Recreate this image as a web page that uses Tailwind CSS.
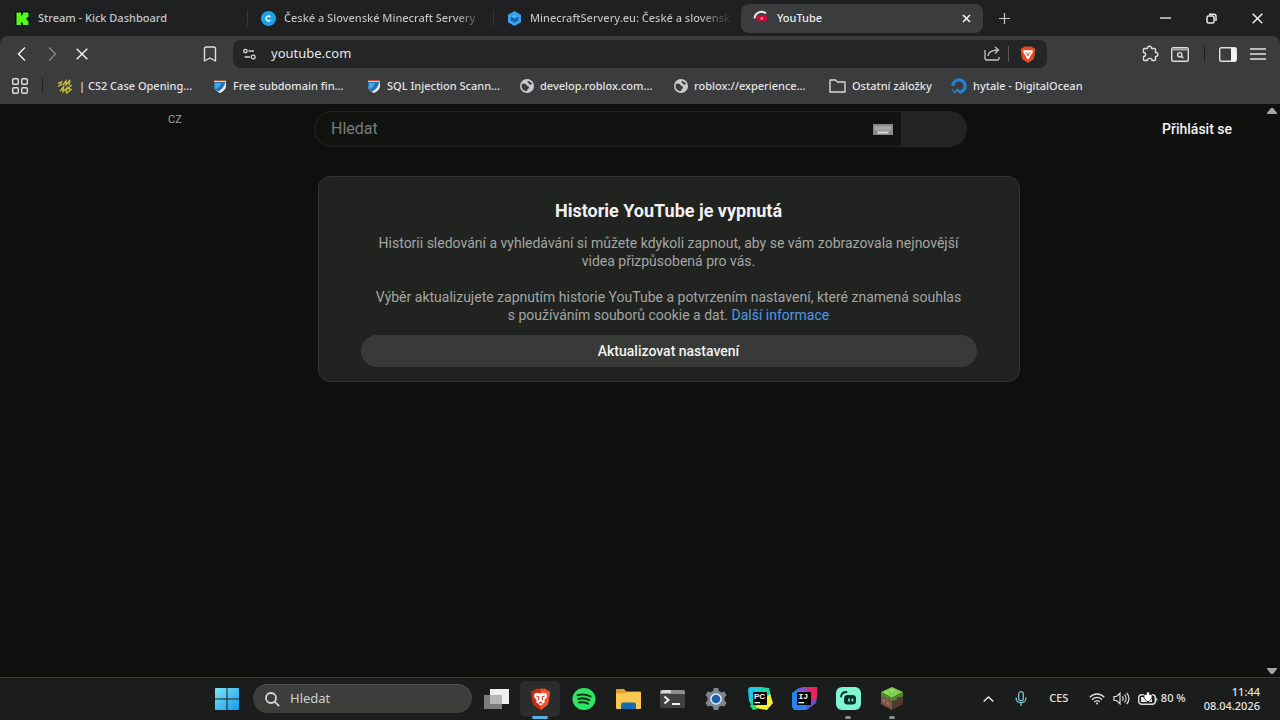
<!DOCTYPE html>
<html lang="cs">
<head>
    <meta charset="UTF-8">
    <meta name="viewport" content="width=device-width, initial-scale=1.0">
    <title>YouTube</title>
    <script src="https://cdn.jsdelivr.net/npm/@tailwindcss/browser@4"></script>
</head>
<body class="flex min-h-screen flex-col overflow-x-hidden bg-[#0e100e] font-['Noto_Sans','Open_Sans',sans-serif] text-[#e3e3e3]">

    <!-- Tab strip -->
    <nav class="flex h-9 items-center bg-[#1f2022] text-[11px] font-medium text-[#c4c5c6]" aria-label="Karty">
        <a href="#" class="flex h-7 w-[247px] items-center gap-2 pl-[15px]">
            <svg class="size-[15px] shrink-0" viewBox="0 0 15 15"><rect width="15" height="15" rx="2" fill="#081005"/><path fill="#53fc18" d="M1.500 1.500h4.500v3h1v-1h1v-2h5.500v4.500h-1.500v1.500h-1v1h1v1h1.500v4.500H8v-2H7v-1H6v3H1.500z"/></svg>
            <span>Stream - Kick Dashboard</span>
        </a>
        <span class="h-4 w-px bg-[#36373a]"></span>
        <a href="#" class="flex h-7 w-[245px] items-center gap-2 pl-[13px]">
            <svg class="size-[15px] shrink-0" viewBox="0 0 15 15"><circle cx="7.5" cy="7.5" r="7.5" fill="#1ba5f0"/><path fill="none" stroke="#e9f7ff" stroke-width="1.5" d="M9.400 6A2.400 2.400 0 1 0 9.400 9"/></svg>
            <span class="bg-linear-to-r from-[#c4c5c6] from-90% to-[#5a5b5d] bg-clip-text whitespace-nowrap text-transparent">České a Slovenské Minecraft Servery</span>
        </a>
        <span class="h-4 w-px bg-[#36373a]"></span>
        <a href="#" class="flex h-7 w-[247px] items-center gap-2 pl-[13px]">
            <svg class="size-[15px] shrink-0" viewBox="0 0 15 15"><path fill="#3aa2ee" d="M7.5 0 14 3.7v7.6L7.5 15 1 11.300V3.700z"/><path fill="#1763ae" d="m7.500 3.500 3.700 2.100v3.900l-3.700 2.100-3.700-2.100V5.600z"/><path fill="#4db3f7" d="m7.500 3.500 3.700 2.100-3.700 2-3.700-2z"/></svg>
            <span class="bg-linear-to-r from-[#c4c5c6] from-85% to-[#2b2c2e] bg-clip-text whitespace-nowrap text-transparent">MinecraftServery.eu: České a slovensk</span>
        </a>
        <a href="#" class="flex h-[29px] w-[242px] items-center gap-2 rounded-lg bg-[#3b3c3e] pr-3 pl-3 text-[#ececec]" aria-current="page">
            <svg class="size-4 shrink-0" viewBox="0 0 16 16"><rect x="3.500" y="5" width="10.500" height="6.500" rx="3" fill="#d6093f"/><path fill="none" stroke="#f5e9ec" stroke-width="2" d="M1.500 8.500a7 7 0 0 1 11.500-5"/><path fill="#ffd5df" d="m7.800 7 2.600 1.400-2.600 1.400z"/></svg>
            <span class="grow">YouTube</span>
            <svg class="size-[9px]" viewBox="0 0 9 9" stroke="#eee" stroke-width="1.700"><path d="m1 1 7 7M8 1 1 8"/></svg>
        </a>
        <button class="flex h-9 w-[42px] items-center justify-center" aria-label="Nová karta">
            <svg class="size-[11px]" viewBox="0 0 11 11" stroke="#c8c8c8" stroke-width="1.200"><path d="M5.500 0v11M0 5.500h11"/></svg>
        </button>
        <div class="ml-auto flex">
            <button class="flex h-9 w-[46px] items-center justify-center" aria-label="Minimalizovat">
                <svg class="size-[11px]" viewBox="0 0 11 11" stroke="#e8e8e8" stroke-width="1.400"><path d="M0 5h11"/></svg>
            </button>
            <button class="flex h-9 w-[46px] items-center justify-center" aria-label="Obnovit">
                <svg class="size-[11px]" viewBox="0 0 11 11" fill="none" stroke="#e8e8e8" stroke-width="1.500"><rect x="1" y="3" width="7" height="7" rx="1.500"/><path d="M3 1.200h5a2 2 0 0 1 2 2V8"/></svg>
            </button>
            <button class="flex h-9 w-[46px] items-center justify-center" aria-label="Zavřít">
                <svg class="size-[11px]" viewBox="0 0 11 11" stroke="#eee" stroke-width="1.500"><path d="m.7.700 9.600 9.600M10.300.700.700 10.300"/></svg>
            </button>
        </div>
    </nav>

    <!-- Toolbar -->
    <div class="bg-[#1f2022]">
    <div class="rounded-t-lg bg-[#3b3c3e]">
        <div class="flex h-9 items-center px-[7px]">
            <button class="flex h-7 w-[30px] items-center justify-center" aria-label="Zpět">
                <svg class="size-4" viewBox="0 0 16 16" fill="none" stroke="#eee" stroke-width="1.500"><path d="M11 1.500 4.500 8l6.500 6.500"/></svg>
            </button>
            <button class="flex h-7 w-[30px] items-center justify-center" aria-label="Vpřed">
                <svg class="size-4" viewBox="0 0 16 16" fill="none" stroke="#87888a" stroke-width="1.400"><path d="M5 1.500 11.500 8 5 14.500"/></svg>
            </button>
            <button class="flex h-7 w-[30px] items-center justify-center" aria-label="Zastavit">
                <svg class="size-3" viewBox="0 0 12 12" stroke="#eee" stroke-width="1.500"><path d="m.7.700 10.600 10.600M11.300.700.700 11.300"/></svg>
            </button>
            <button class="ml-[98px] flex h-7 w-[30px] items-center justify-center" aria-label="Přidat záložku">
                <svg class="h-4 w-[14px]" viewBox="0 0 14 16" fill="none" stroke="#dedede" stroke-width="1.400" stroke-linejoin="round"><path d="M1.500 2.500a1.500 1.500 0 0 1 1.500-1.500h8a1.500 1.500 0 0 1 1.500 1.500v12.500L7 12l-5.500 3z"/></svg>
            </button>
            <div class="ml-2 flex h-7 grow items-center rounded-lg bg-[#242527] pl-[10px]">
                <svg class="h-3 w-[13px]" viewBox="0 0 13 12" fill="none" stroke="#d5d5d5" stroke-width="1.300"><circle cx="2.400" cy="3" r="1.700"/><path d="M5.500 3H11M1.500 9H7"/><circle cx="10.200" cy="9" r="1.900"/></svg>
                <input type="text" value="youtube.com" aria-label="Adresní řádek" class="ml-[15px] min-w-0 grow bg-transparent text-[13px] text-[#e6e6e6] outline-none">
                <button class="flex h-7 w-8 items-center justify-center" aria-label="Sdílet">
                    <svg class="size-4" viewBox="0 0 16 16" fill="none" stroke="#c4c4c4" stroke-width="1.300"><path d="M1 4v8.500A1.500 1.500 0 0 0 2.500 14h11a1.500 1.500 0 0 0 1.500-1.500V11M4 10c.5-4 4-6 10.500-6M11 1l3.500 3L11 7.500"/></svg>
                </button>
                <span class="h-4 w-px bg-[#58595b]"></span>
                <button class="flex h-7 w-[38px] items-center justify-center" aria-label="Brave Shields">
                    <svg class="h-[17px] w-4" viewBox="0 0 16 17"><path fill="#e84b24" d="M4.500.500h7L13.300 2l1.400.300.800 2-.4 1L14 12c-.4 1.500-2.800 3-6 5-3.200-2-5.600-3.500-6-5L.900 5.300l-.4-1 .8-2L2.700 2z"/><path fill="#fff" d="M3 4.500 5.500 4 8 4.500l2.500-.5 2.500.5-.7 2.500L10 10.500 9.500 12 8 13.500 6.500 12 6 10.500 3.700 7z"/><path fill="none" stroke="#e84b24" stroke-width=".9" d="m5.500 6.500 1.500.700L8 10l1-2.800 1.500-.7"/></svg>
                </button>
            </div>
            <div class="ml-[88px] flex items-center">
                <button class="flex h-7 w-[30px] items-center justify-center" aria-label="Rozšíření">
                    <svg class="size-[18px]" viewBox="0 0 18 18" fill="none" stroke="#dedede" stroke-width="1.400" stroke-linejoin="round"><path d="M2.500 4.500a1 1 0 0 1 1-1h3c-.4-3 4.400-3 4 0h3a1 1 0 0 1 1 1v3c3.200-.4 3.200 4.400 0 4v3a1 1 0 0 1-1 1h-2.500c0-2.800-4.500-2.800-4.500 0h-3a1 1 0 0 1-1-1v-3c2.800 0 2.800-4 0-4z"/></svg>
                </button>
                <button class="flex h-7 w-[30px] items-center justify-center" aria-label="Hledat karty">
                    <svg class="h-[15px] w-[18px]" viewBox="0 0 18 15" fill="none" stroke="#dedede" stroke-width="1.400"><rect x=".7" y=".7" width="16.600" height="13.600" rx="1.500"/><path stroke-width="2" stroke="#a7a7a7" d="M1.500 2.500h15"/><circle cx="8.700" cy="7.700" r="2.100"/><path d="m10.300 9.300 2 2"/></svg>
                </button>
                <span class="mr-2 ml-[9px] h-4 w-px bg-[#232426]"></span>
                <button class="flex h-7 w-[30px] items-center justify-center" aria-label="Postranní panel">
                    <svg class="h-[15px] w-[18px]" viewBox="0 0 18 15"><rect x=".7" y=".7" width="16.600" height="13.600" rx="1.500" fill="none" stroke="#dedede" stroke-width="1.400"/><path fill="#f2f2f2" d="M12 1h5v13h-5z"/></svg>
                </button>
                <button class="flex h-7 w-[30px] items-center justify-center" aria-label="Nabídka">
                    <svg class="h-3 w-4" viewBox="0 0 16 12" stroke="#e2e2e2" stroke-width="1.400"><path d="M0 1h16M0 6h16M0 11h16"/></svg>
                </button>
            </div>
        </div>

        <!-- Bookmarks -->
        <div class="flex h-8 items-center pb-1 pl-3 text-[11px] font-medium whitespace-nowrap">
            <button class="flex w-4 items-center" aria-label="Aplikace">
                <svg class="size-4" viewBox="0 0 16 16" fill="none" stroke="#dedede" stroke-width="1.400"><rect x=".7" y=".7" width="5.600" height="5.600" rx="1.200"/><rect x="9.700" y=".7" width="5.600" height="5.600" rx="1.200"/><rect x=".7" y="9.700" width="5.600" height="5.600" rx="1.200"/><rect x="9.700" y="9.700" width="5.600" height="5.600" rx="1.200"/></svg>
            </button>
            <span class="mx-[14px] h-4 w-px bg-[#232426]"></span>
            <a href="#" class="flex w-[156px] items-center gap-[6px]">
                <svg class="h-[15px] w-4" viewBox="0 0 16 15" fill="none" stroke="#c9be35" stroke-width="1.400"><path d="M5.500 2.500 2 4l2.500 1.500L1 7.500M6 6l3-4v4l4-5-1 5M3 12l3.500-4-.5 4.500L10 9l-1 5M15 6l-4 3 3 1.500-4.500 4"/></svg>
                <span>| CS2 Case Opening...</span>
            </a>
            <a href="#" class="flex w-[154px] items-center gap-[6px]">
                <svg class="size-[14px]" viewBox="0 0 14 14"><path fill="#e9edf0" d="M1 1.500h12V7c0 3.500-3 5.500-6 7-3-1.500-6-3.500-6-7z"/><path fill="#2475b8" d="M1 3h11.500C11 8 8.500 11.500 4.500 12.500 2 10.500 1 9 1 7z"/><path fill="#4aa6df" d="M2 4h6C7 7 5.500 9 3 10 2 8.500 2 7 2 6z"/><path fill="#b0532f" d="M1 1h12v1.200H1z"/></svg>
                <span>Free subdomain fin...</span>
            </a>
            <a href="#" class="flex w-[153px] items-center gap-[6px]">
                <svg class="size-[14px]" viewBox="0 0 14 14"><path fill="#e9edf0" d="M1 1.500h12V7c0 3.500-3 5.500-6 7-3-1.500-6-3.500-6-7z"/><path fill="#2475b8" d="M1 3h11.500C11 8 8.500 11.500 4.500 12.500 2 10.500 1 9 1 7z"/><path fill="#4aa6df" d="M2 4h6C7 7 5.500 9 3 10 2 8.500 2 7 2 6z"/><path fill="#b0532f" d="M1 1h12v1.200H1z"/></svg>
                <span>SQL Injection Scann...</span>
            </a>
            <a href="#" class="flex w-[154px] items-center gap-[6px]">
                <svg class="size-[14px]" viewBox="0 0 14 14"><circle cx="7" cy="7" r="7" fill="#c9cacb"/><path fill="#3b3c3e" d="M2 4.500c2 .5 4-.5 4.500 1.500.4 1.500 2.500.5 2.500 2.500 0 1.500-2 1.500-2 3.500-3 0-5.300-2-5.500-5zM7.500 2c2 .2 3.700 1.300 4.500 3-1 1-2.500 1-3-.3C8.700 4 7 3.500 7.500 2z"/></svg>
                <span>develop.roblox.com...</span>
            </a>
            <a href="#" class="flex w-[155px] items-center gap-[6px]">
                <svg class="size-[14px]" viewBox="0 0 14 14"><circle cx="7" cy="7" r="7" fill="#c9cacb"/><path fill="#3b3c3e" d="M2 4.500c2 .5 4-.5 4.500 1.500.4 1.500 2.500.5 2.500 2.500 0 1.500-2 1.500-2 3.500-3 0-5.300-2-5.500-5zM7.500 2c2 .2 3.700 1.300 4.500 3-1 1-2.500 1-3-.3C8.700 4 7 3.500 7.500 2z"/></svg>
                <span>roblox://experience...</span>
            </a>
            <a href="#" class="flex w-[122px] items-center gap-[6px]">
                <svg class="h-[14px] w-[17px]" viewBox="0 0 17 14" fill="none" stroke="#d9d9d9" stroke-width="1.400" stroke-linejoin="round"><path d="M1 1h5.500l2 2H16v10H1z"/></svg>
                <span>Ostatní záložky</span>
            </a>
            <a href="#" class="flex items-center gap-[6px]">
                <svg class="size-4" viewBox="0 0 16 16"><path fill="none" stroke="#2380d8" stroke-width="3.200" d="M1.800 8A6.200 6.200 0 1 1 8 14.200"/><path fill="#2380d8" d="M5 11h3v3H5zM2.500 13h2.300v2.300H2.500zM.800 11h1.700v1.700H.800z"/></svg>
                <span>hytale - DigitalOcean</span>
            </a>
        </div>
    </div>
    </div>

    <!-- Page -->
    <div class="flex grow font-[Roboto,sans-serif]">
        <div class="grow">
            <header class="flex items-start pt-[7px] pr-8">
                <span class="w-[314px] shrink-0 pt-px pl-[168px] text-[11px] text-[#a3a5a3]">CZ</span>
                <form class="flex h-9 max-w-[653px] grow">
                    <div class="flex grow items-center rounded-l-full border border-[#232523] bg-[#111311] pr-2 pl-4">
                        <input type="text" placeholder="Hledat" aria-label="Hledat" class="min-w-0 grow bg-transparent text-[16px] outline-none placeholder:text-[#7b7d7b]">
                        <svg class="h-[11px] w-5" viewBox="0 0 20 11"><path fill="#858785" d="M0 0h20v11H0z"/><path fill="#a5a7a5" d="M1.500 2h17v4.500h-17z"/><path fill="#dcdedc" d="M4.500 7.500h11v2h-11z"/></svg>
                    </div>
                    <button type="submit" class="w-[65px] rounded-r-full bg-[#222422]" aria-label="Vyhledat"></button>
                </form>
                <a href="#" class="ml-auto pt-2 text-[14px] leading-5 font-medium text-[#f1f1f1]">Přihlásit se</a>
            </header>

            <main class="pt-[29px] pl-[73px]">
                <section class="mx-auto max-w-[702px] rounded-xl border border-[#323532] bg-[#212321] px-[42px] pt-[23px] pb-[14px] text-center">
                    <h1 class="text-[18px] leading-[22px] font-bold text-[#f1f1f1]">Historie YouTube je vypnutá</h1>
                    <p class="mt-3 px-3 text-[14px] leading-[18px] text-[#a3a5a3]">Historii sledování a vyhledávání si můžete kdykoli zapnout, aby se vám zobrazovala nejnovější<br>videa přizpůsobená pro vás.</p>
                    <p class="mt-[18px] text-[14px] leading-[18px] text-[#a3a5a3]">Výběr aktualizujete zapnutím historie YouTube a potvrzením nastavení, které znamená souhlas<br>s používáním souborů cookie a dat. <a href="#" class="text-[#4b9ae6]">Další informace</a></p>
                    <button class="mt-[11px] h-8 w-full rounded-full bg-[#383a38] text-[14px] font-medium text-[#f1f1f1]">Aktualizovat nastavení</button>
                </section>
            </main>
        </div>
        <!-- Scrollbar -->
        <div class="flex w-4 shrink-0 flex-col items-center justify-between pt-1 pb-[3px]">
            <svg class="h-[6px] w-[10px]" viewBox="0 0 10 6"><path fill="#a5a6a5" d="M4 0h2l4 5v1H0V5z"/></svg>
            <svg class="h-[6px] w-[10px]" viewBox="0 0 10 6"><path fill="#a5a6a5" d="M4 6h2l4-5V0H0v1z"/></svg>
        </div>
    </div>

    <!-- Taskbar -->
    <footer class="flex h-[43px] items-center border-t border-[#363836] bg-[#1b1d1c] pb-px pl-[205px]">
        <button class="flex h-10 w-11 items-center justify-center" aria-label="Start">
            <svg class="h-[22px] w-6" viewBox="0 0 24 22"><defs><linearGradient id="win" x1="0" y1="0" x2="1" y2="1"><stop offset="0" stop-color="#7be5fb"/><stop offset="1" stop-color="#169ae8"/></linearGradient></defs><path fill="url(#win)" d="M1 0h10.500v10.500H0V1a1 1 0 0 1 1-1zM12.500 0H23a1 1 0 0 1 1 1v9.500H12.500zM0 11.500h11.500V22H1a1 1 0 0 1-1-1zM12.500 11.500H24V21a1 1 0 0 1-1 1H12.500z"/></svg>
        </button>
        <label class="ml-1 flex h-[29px] w-[219px] items-center rounded-full border-t border-[#505250] bg-[#3c3e3c] pl-3">
            <svg class="size-[15px] shrink-0" viewBox="0 0 15 15" fill="none" stroke="#d6d6d6" stroke-width="1.800"><circle cx="6" cy="6" r="5"/><path d="m9.700 9.700 4.500 4.500"/></svg>
            <input type="text" placeholder="Hledat" aria-label="Hledat" class="ml-[10px] min-w-0 grow bg-transparent text-[13px] outline-none placeholder:text-[#cfcfcf]">
        </label>
        <button class="ml-[2px] flex h-10 w-11 items-center justify-center" aria-label="Zobrazení úloh">
            <svg class="h-5 w-[25px]" viewBox="0 0 25 20"><path fill="#7b7d7c" d="M0 6h18v14H0z"/><path fill="#efefef" d="M6 0h19v15H6z"/><path fill="#b4b5b4" d="M6 6h12v9H6z"/></svg>
        </button>
        <button class="relative flex h-10 w-11 items-center justify-center" aria-label="Brave">
            <span class="absolute inset-x-[2px] inset-y-[2px] rounded-md bg-[#2b2d2c]"></span>
            <svg class="relative h-[22px] w-[21px]" viewBox="0 0 16 17"><path fill="#c92c12" d="M4.500.500h7L13.300 2l1.400.300.800 2-.4 1L14 12c-.4 1.500-2.800 3-6 5-3.200-2-5.600-3.500-6-5L.900 5.300l-.4-1 .8-2L2.700 2z"/><path fill="#f0542f" d="M8 .500h3.500L13.300 2l1.400.300.800 2-.4 1L14 12c-.4 1.500-2.800 3-6 5z"/><path fill="#fff" d="M3.300 4.500 5.500 3.700 8 4.300l2.500-.6 2.200.8.300 2.300L11 9.500l.3 1.500L8 13.700 4.700 11 5 9.500 3 6.800z"/><path fill="none" stroke="#d83a1b" stroke-width=".9" d="M4.800 6.200 6.800 7l-.5 2.300M11.200 6.200 9.200 7l.5 2.300M6.500 12 8 11l1.500 1"/></svg>
            <span class="absolute bottom-0 left-[14px] h-[3px] w-4 rounded-full bg-[#55b3e2]"></span>
        </button>
        <button class="flex h-10 w-11 items-center justify-center" aria-label="Spotify">
            <svg class="h-[22px] w-6" viewBox="0 0 24 22"><ellipse cx="12" cy="11" rx="11.500" ry="11" fill="#2ee566"/><path fill="none" stroke="#12351c" stroke-width="2.100" stroke-linecap="round" d="M5.500 7.200c4.500-1.300 9-.9 13 1.200M6.300 11c4-1.100 7.500-.7 11 1.200M7 14.500c3.300-.8 6-.5 9 1.100"/></svg>
        </button>
        <button class="flex h-10 w-11 items-center justify-center" aria-label="Průzkumník souborů">
            <svg class="h-5 w-[25px]" viewBox="0 0 25 20"><path fill="#dda032" d="M0 1a1 1 0 0 1 1-1h7l2.500 2.500H24a1 1 0 0 1 1 1V7H0z"/><path fill="#f8cb50" d="M0 4.500h8L10.500 3H25v16a1 1 0 0 1-1 1H1a1 1 0 0 1-1-1z"/><path fill="#1969b1" d="M5 20v-4.500a2 2 0 0 1 2-2h11a2 2 0 0 1 2 2V20z"/></svg>
        </button>
        <button class="flex h-10 w-11 items-center justify-center" aria-label="Terminál">
            <svg class="h-[18px] w-[25px]" viewBox="0 0 25 18"><rect width="25" height="18" rx="2" fill="#404242"/><path fill="#8d8f8f" d="M2 0h21a2 2 0 0 1 2 2v2H0V2a2 2 0 0 1 2-2z"/><path fill="#d6d6d6" d="M2 0h9v3H1z"/><path fill="none" stroke="#f2f2f2" stroke-width="2" d="m4.500 6.500 4 3.500-4 3.500M12 14h8"/></svg>
        </button>
        <button class="flex h-10 w-11 items-center justify-center" aria-label="Nastavení">
            <svg class="h-[22px] w-6" viewBox="0 0 24 22"><path fill="#7c868e" d="M9.800 0h4.400l.8 3 2.200 1.200L20.300 3.500l2.300 3.800-2.100 2.300v2.800l2.100 2.300-2.300 3.800-3.100-.7L15 19l-.8 3H9.800L9 19l-2.200-1.200-3.100.7-2.300-3.800 2.100-2.300V9.600L1.400 7.300l2.300-3.800 3.100.7L9 3z"/><circle cx="12" cy="11" r="5.800" fill="#e2ebf4"/><circle cx="12" cy="11" r="4.300" fill="#1d61ab"/></svg>
        </button>
        <button class="flex h-10 w-11 items-center justify-center" aria-label="PyCharm">
            <svg class="h-[23px] w-[25px]" viewBox="0 0 25 23"><path fill="#1fc9e8" d="M0 2 2 0h11l3 5-10 15-5-6z"/><path fill="#21d7a0" d="m13 0 8 1 2 8-8 9-9 4-4-6 5-9z"/><path fill="#f3ef3b" d="m22 7 3 9-6 7-7-1-5-2 10-9z"/><path fill="#26d97b" d="m4 16 6 6-5 1-3-4z"/><path fill="#050505" d="M5 5h14v13H5z"/><text x="6" y="12" fill="#fff" font-size="8" font-weight="700" font-family="Liberation Sans, sans-serif">PC</text><path fill="#fff" d="M6.500 15h5.500v1.300H6.500z"/></svg>
        </button>
        <button class="flex h-10 w-11 items-center justify-center" aria-label="IntelliJ IDEA">
            <svg class="h-[23px] w-[25px]" viewBox="0 0 25 23"><path fill="#2a83ea" d="M0 6 7 1l9 2 4 14-6 6H2l-2-3z"/><path fill="#874fc4" d="m7 1 4-1h8l2 12-8 2z"/><path fill="#e7265f" d="M15 0h10v10l-6 7-3-10z"/><path fill="#6653c8" d="m25 10-1 6-9 7-1-5 5-3z"/><path fill="#050505" d="M5 5h14v13H5z"/><text x="6.500" y="12" fill="#fff" font-size="8" font-weight="700" font-family="Liberation Mono, monospace">IJ</text><path fill="#fff" d="M6.500 15h5.500v1.300H6.500z"/></svg>
        </button>
        <button class="relative flex h-10 w-11 items-center justify-center" aria-label="Streamlabs">
            <svg class="h-[23px] w-[25px]" viewBox="0 0 25 23"><rect width="25" height="23" rx="6" fill="#80f5d2"/><rect x="8" y="8" width="12" height="9.500" rx="3.500" fill="#0d2d27"/><path fill="none" stroke="#0d2d27" stroke-width="1.800" stroke-linecap="round" d="M5 9.500c.5-3 2.500-4.500 5.500-4.500"/><path stroke="#80f5d2" stroke-width="1.600" d="M13 11.500v3M16.500 11.500v3"/></svg>
            <span class="absolute bottom-0 left-[19px] h-[3px] w-[6px] rounded-full bg-[#8c8e8d]"></span>
        </button>
        <button class="relative flex h-10 w-11 items-center justify-center" aria-label="Minecraft">
            <svg class="h-[23px] w-[22px]" viewBox="0 0 22 23"><path fill="#80cc4e" d="m11 0 11 5-11 6L0 5z"/><path fill="#7c5645" d="m0 5 11 6v12L0 17z"/><path fill="#51392e" d="m22 5-11 6v12l11-6z"/><path fill="#4f8b2f" d="m0 5 11 6v3l-2-1v-1.500l-2-1v2l-3-2V9L2 8v2L0 9zM22 5l-11 6v3l2-1v1l3-2v-1.500l3-1V11l3-2z"/><path fill="#a4786a" d="M2 12l2 1v2l-2-1zM6 15l2 1v2l-2-1z"/><path fill="#a1e36b" d="m11 2 3 1.500-3 1.500-3-1.500zM5 4.500 8 6 6 7 3 5.500z"/></svg>
            <span class="absolute bottom-0 left-[19px] h-[3px] w-[6px] rounded-full bg-[#8c8e8d]"></span>
        </button>

        <!-- System tray -->
        <div class="ml-auto flex items-center pr-5 text-[11px] font-medium">
            <button class="flex h-10 w-8 items-center justify-center" aria-label="Skryté ikony">
                <svg class="h-[6px] w-[11px]" viewBox="0 0 11 6" fill="none" stroke="#e3e3e3" stroke-width="1.500"><path d="m.7 5.500 4.800-4.500 4.800 4.500"/></svg>
            </button>
            <button class="flex h-10 w-8 items-center justify-center" aria-label="Mikrofon">
                <svg class="h-[15px] w-3" viewBox="0 0 12 15" fill="none" stroke="#7cc0c6" stroke-width="1.300"><rect x="3.700" y=".7" width="4.600" height="9" rx="2.300"/><path d="M1 6.500c0 7 10 7 10 0M6 11.700V15"/></svg>
            </button>
            <button class="h-10 w-11">CES</button>
            <button class="flex h-10 items-center gap-2 pl-2" aria-label="Síť, hlasitost a baterie">
                <svg class="h-3 w-4" viewBox="0 0 16 12" fill="none" stroke="#dedede" stroke-width="1.300"><path d="M.700 4.300c4.200-4.400 10.400-4.400 14.600 0M3 6.700c3-3 7-3 10 0M5.300 9c1.700-1.700 3.700-1.700 5.400 0"/><circle cx="8" cy="10.600" r="1" fill="#dedede" stroke="none"/></svg>
                <svg class="h-[13px] w-[17px]" viewBox="0 0 17 13" fill="none" stroke="#dedede" stroke-width="1.200"><path d="M1 4.500h2.500L7 1.200v10.600L3.500 8.500H1zM9.300 4.300c1 1.300 1 3.100 0 4.400M11.500 2.700c2 2.200 2 5.400 0 7.600M13.700 1c3 3.200 3 7.800 0 11"/></svg>
                <span class="flex items-center gap-[3px]">
                    <svg class="h-[13px] w-5" viewBox="0 0 20 13"><rect x=".7" y="2.700" width="16.600" height="9.600" rx="3" fill="none" stroke="#dedede" stroke-width="1.400"/><path fill="#e8e8e8" d="M3 5h11v5H3zM18.300 5.500c1.500.5 1.500 3.500 0 4z"/><path fill="#fff" stroke="#1b1d1c" stroke-width=".8" d="M8.500 0h3v2.500H14V6l-3 3.500H9L6 6V2.500h2.500z"/></svg>
                    <span>80 %</span>
                </span>
            </button>
            <button class="ml-[18px] text-right text-[11px] leading-[14px]">11:44<br>08.04.2026</button>
        </div>
    </footer>

</body>
</html>
